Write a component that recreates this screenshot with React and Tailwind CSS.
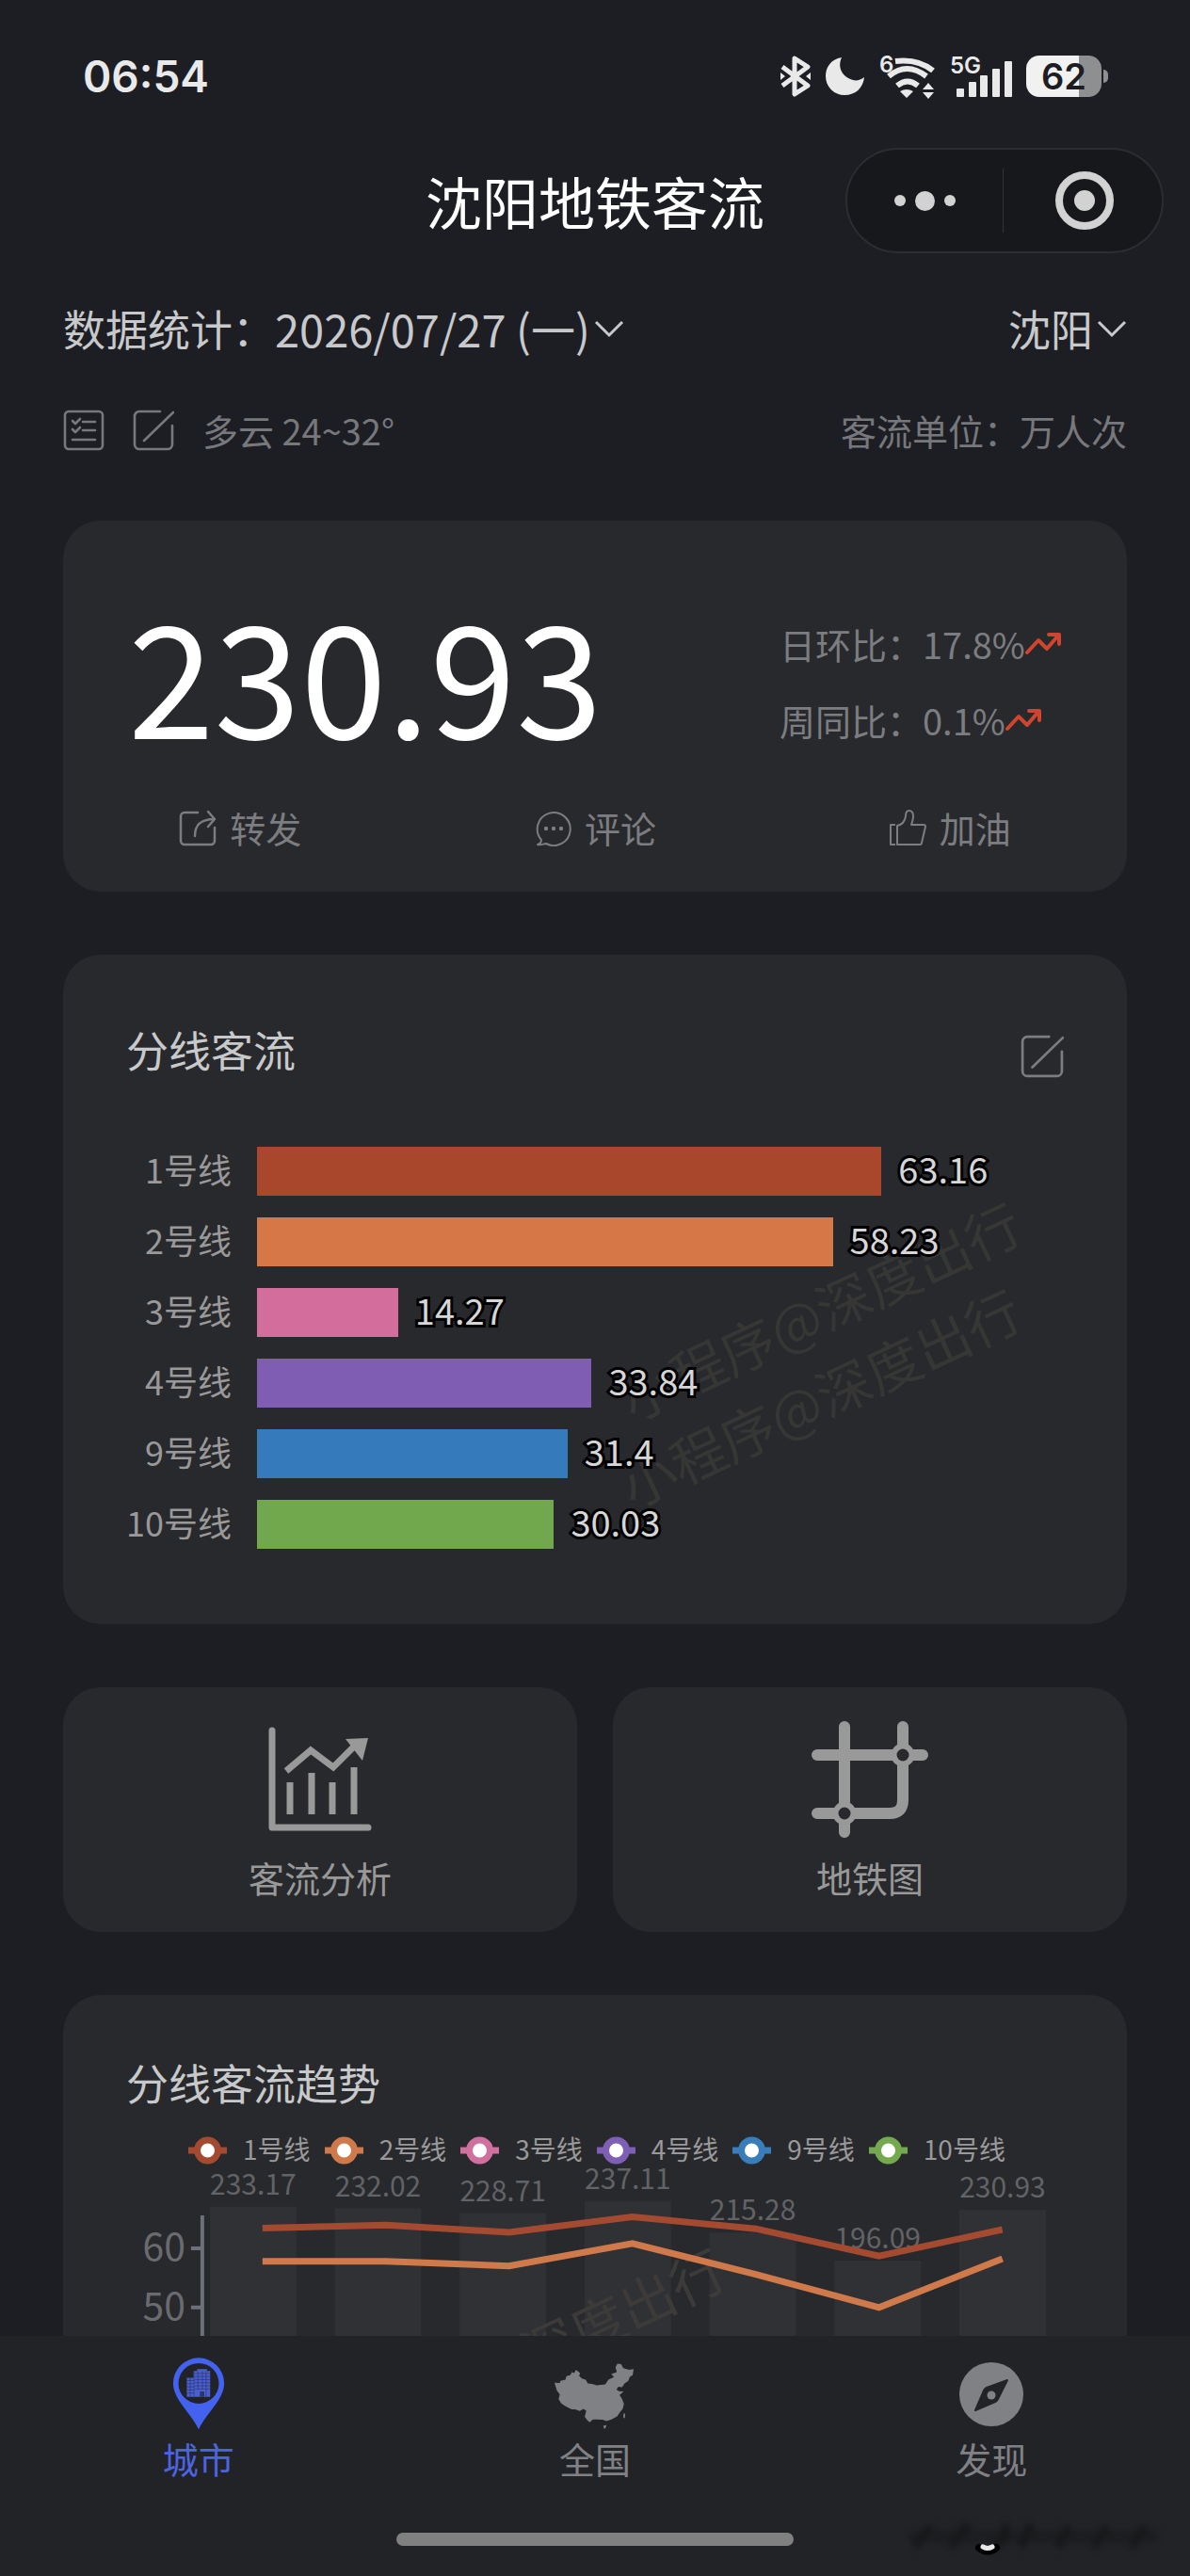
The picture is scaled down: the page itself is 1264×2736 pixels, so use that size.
const LINES = [
  { name: "1号线", value: 63.16, bar: "bg-[#a8472b]", stroke: "#a34a30" },
  { name: "2号线", value: 58.23, bar: "bg-[#d67748]", stroke: "#d07a4c" },
  { name: "3号线", value: 14.27, bar: "bg-[#d36d9b]", stroke: "#d0709e" },
  { name: "4号线", value: 33.84, bar: "bg-[#7e5db3]", stroke: "#7f5fb5" },
  { name: "9号线", value: 31.4, bar: "bg-[#357abb]", stroke: "#3a7dbb" },
  { name: "10号线", value: 30.03, bar: "bg-[#72a84d]", stroke: "#74a94f" },
];

const BAR_MAX = 81.6;

const TOTALS = [233.17, 232.02, 228.71, 237.11, 215.28, 196.09, 230.93];

const TREND = [
  { stroke: "#a34a30", values: [63.4, 63.9, 62.7, 65.3, 63.3, 58.7, 63.16] },
  { stroke: "#d07a4c", values: [57.8, 57.8, 57, 60.8, 55.6, 50, 58.23] },
];

const WATERMARK = "小程序@深度出行";

const Chevron = () => (
  <svg viewBox="0 0 32 20" className="h-5 w-8" fill="none" stroke="#c8c9cb" strokeWidth="3" aria-hidden="true">
    <path d="M2 3l14 14L30 3" />
  </svg>
);

const EditIcon = ({ className }) => (
  <svg viewBox="0 0 44 44" className={className} fill="none" stroke="currentColor" strokeWidth="2.6" strokeLinecap="round" aria-hidden="true">
    <path d="M29 2H7a5 5 0 0 0-5 5v30a5 5 0 0 0 5 5h30a5 5 0 0 0 5-5V17" />
    <path d="M43 3L12 33" />
  </svg>
);

const ListIcon = () => (
  <svg viewBox="0 0 44 44" className="size-11" fill="none" stroke="currentColor" strokeWidth="2.6" strokeLinecap="round" aria-hidden="true">
    <rect x="2" y="2" width="40" height="40" rx="4" />
    <path d="M21 13h13M21 22h13M10 32h24" />
    <path d="M10 12l3 3 5-5M10 21l3 3 5-5" strokeLinejoin="round" />
  </svg>
);

const TrendUp = () => (
  <svg viewBox="0 0 38 24" className="h-6 w-[38px]" fill="none" stroke="#d0452f" strokeWidth="4" strokeLinecap="round" strokeLinejoin="round" aria-hidden="true">
    <path d="M2 21L14 8l9 9L35 3" />
    <path d="M25 2h11v10" />
  </svg>
);

const ShareIcon = () => (
  <svg viewBox="0 0 40 40" className="size-10" fill="none" stroke="currentColor" strokeWidth="2.5" strokeLinecap="round" strokeLinejoin="round" aria-hidden="true">
    <path d="M20 4H6a4 4 0 0 0-4 4v26a4 4 0 0 0 4 4h28a4 4 0 0 0 4-4V20" />
    <path d="M17 29c0-11 5-18 21-18M31 3l7 8-7 8" />
  </svg>
);

const CommentIcon = () => (
  <svg viewBox="0 0 40 40" className="size-10" fill="none" stroke="currentColor" strokeWidth="2" strokeLinejoin="round" aria-hidden="true">
    <path d="M8 33a17.5 17.5 0 1 1 5 4c-3 0-5 2-9 1 3-1 4-3 4-5z" />
    <g fill="currentColor" stroke="none">
      <circle cx="13" cy="21" r="2.2" />
      <circle cx="21" cy="21" r="2.2" />
      <circle cx="29" cy="21" r="2.2" />
    </g>
  </svg>
);

const LikeIcon = () => (
  <svg viewBox="0 0 40 40" className="size-10" fill="none" stroke="currentColor" strokeWidth="2" strokeLinejoin="round" aria-hidden="true">
    <path d="M7 17H2v21h5" />
    <path d="M9 38V18c5-1 8-4 9-10 0-4 1-6 3.500-6S26 4 26 8c0 3-1 6-2 9h13c1 0 2 1 2 2l-4 17c0 1-1 2-2 2H9z" />
  </svg>
);

const AnalysisIcon = () => (
  <svg viewBox="0 0 110 112" className="h-28 w-[110px]" fill="none" stroke="#999" aria-hidden="true">
    <path d="M4 4v103h102" strokeWidth="7" strokeLinecap="round" strokeLinejoin="round" />
    <path d="M23 59v34M46 49v44M68 59v34M91 43v50" strokeWidth="7" />
    <path d="M19 47l26-22 24 18 24-24" strokeWidth="7" />
    <path d="M82 13l24-1-6 24z" fill="#999" stroke="none" />
  </svg>
);

const MetroMapIcon = () => (
  <svg viewBox="0 0 126 126" className="size-[126px]" fill="none" stroke="#999" strokeWidth="12" strokeLinecap="round" aria-hidden="true">
    <path d="M7 37h112M36 7v112M98 7v78q0 14-14 14H7" />
    <circle cx="98" cy="37" r="9.500" fill="#28292c" strokeWidth="6" />
    <circle cx="36" cy="99" r="9.500" fill="#28292c" strokeWidth="6" />
  </svg>
);

const CityIcon = () => (
  <svg viewBox="66 38 168 236" className="h-[78px] w-14" aria-hidden="true">
    <path d="M150 272C128 222 68 176 68 124a82 82 0 0 1 164 0C232 176 172 222 150 272z" fill="#4362f0" />
    <circle cx="150" cy="124" r="65" fill="#222327" />
    <path d="M112 167v-61h22V84h11v-6h32v6h10v83z" fill="#4a5fd0" />
    <path d="M112 115h24M112 125h24M112 135h24M112 145h24M112 155h24M138 92h48M138 102h48M138 112h48M138 122h48M138 132h48M138 142h48M135 84v83M123 106v61M148 84v60M162 84v60M174 84v83" stroke="#2c3568" strokeWidth="2" />
    <path d="M154 150h14v17h-14z" fill="#2c3568" />
  </svg>
);

const CountryIcon = () => (
  <svg viewBox="53 38 264 236" className="h-[78px] w-[88px]" fill="#808185" aria-hidden="true">
    <path d="M55 122L72 123 74 116 90 112 93 101 106 97 111 88 118 91 124 80 137 91 134 100 143 108 155 112 162 124 176 126 190 130 218 127 228 112 246 104 237 94 255 88 251 72 257 61 269 62 276 75 294 80 309 78 306 98 297 103 292 116 280 124 272 136 260 135 254 144 262 149 277 150 264 161 272 174 278 190 274 206 266 216 256 230 238 240 222 245 210 241 192 240 178 240 168 249 160 242 152 231 157 212 148 206 136 213 124 208 108 207 88 196 76 188 68 174 72 160 62 146z" />
    <path d="M277 220l5 2-1 14-5-3zM212 260l10-2-3 9-5 3z" />
  </svg>
);

const DiscoverIcon = () => (
  <svg viewBox="0 0 68 78" className="h-[78px] w-[68px]" aria-hidden="true">
    <circle cx="34" cy="40" r="34" fill="#808185" />
    <path d="M51 25L41 45q-1 2-3 3L17 57l9-21q1-2 3-3z" fill="#222327" stroke="#222327" strokeWidth="2" strokeLinejoin="round" />
    <circle cx="34" cy="41" r="4.500" fill="#808185" />
  </svg>
);

const StatusBar = () => (
  <div className="flex h-14 items-center justify-between pl-[88px] pr-[87px] font-['Inter',sans-serif] text-[#e9e9ea]">
    <span className="text-[46px] leading-[56px] font-semibold">06:54</span>
    <div className="flex items-center gap-[15px]">
      <svg viewBox="0 0 34 44" className="h-11 w-[34px]" fill="none" stroke="currentColor" strokeWidth="5" strokeLinejoin="round" aria-hidden="true">
        <path d="M3 12l27 20-14 9V3l14 9L3 32" />
        <path d="M1 18v8l5-4zM33 18v8l-5-4z" fill="currentColor" stroke="none" />
      </svg>
      <svg viewBox="0 0 42 42" className="size-[42px]" fill="currentColor" aria-hidden="true">
        <path d="M17 1C5 3 0 12 0 21a20 20 0 0 0 20 20c12 0 20-8 21-19-4 3-8 4-12 3-11-3-17-13-12-24z" />
      </svg>
      <svg viewBox="0 0 60 52" className="h-[52px] w-[60px]" fill="none" stroke="currentColor" strokeWidth="6" aria-hidden="true">
        <path d="M17 10q24-3 40 10M10 26q19-16 40 0M19 36q11-9 22 0" />
        <path d="M22 42q7-4 14 0l-7 7zM46 40h12l-6-7zM46 43h12l-6 7z" fill="currentColor" stroke="none" />
        <text x="0" y="22" fill="currentColor" stroke="none" fontSize="24" fontWeight="600">6</text>
      </svg>
      <svg viewBox="0 0 66 52" className="h-[52px] w-[66px]" fill="currentColor" aria-hidden="true">
        <rect x="7" y="39" width="8" height="9" rx="1" />
        <rect x="20" y="32" width="8" height="16" rx="1" />
        <rect x="32" y="25" width="8" height="23" rx="1" />
        <rect x="45" y="18" width="8" height="30" rx="1" />
        <rect x="58" y="10" width="8" height="38" rx="1" />
        <text x="0" y="23" fontSize="24" fontWeight="600">5G</text>
      </svg>
      <div className="flex items-center gap-[2px]">
        <div className="flex h-11 w-20 items-center justify-center rounded-[14px] bg-linear-to-r from-[#f1f1f1] from-70% to-[#8e8f91] to-70% text-[38px] leading-[44px] font-semibold text-[#1d1e23]">
          62
        </div>
        <div className="h-[14px] w-[5px] rounded-r-full bg-[#8e8f91]" />
      </div>
    </div>
  </div>
);

const TitleBar = () => (
  <header className="mt-12 grid grid-cols-[1fr_auto_1fr] items-center pr-7">
    <h1 className="col-start-2 pl-7 text-[60px] leading-[84px] text-white">沈阳地铁客流</h1>
    <div className="flex h-28 w-[338px] items-center justify-self-end rounded-full border-2 border-[#2c2d31] bg-[#17181b]">
      <button type="button" aria-label="更多" className="flex flex-1 items-center justify-center gap-2.5">
        <span className="size-3 rounded-full bg-[#d2d2d2]" />
        <span className="size-[21px] rounded-full bg-[#d2d2d2]" />
        <span className="size-3 rounded-full bg-[#d2d2d2]" />
      </button>
      <span className="h-[68px] w-px bg-[#323337]" />
      <button type="button" aria-label="关闭" className="flex flex-1 items-center justify-center pl-1">
        <span className="flex size-[62px] items-center justify-center rounded-full border-8 border-[#d2d2d2]">
          <span className="size-[22px] rounded-full bg-[#d2d2d2]" />
        </span>
      </button>
    </div>
  </header>
);

const Filters = () => (
  <div className="px-[67px]">
    <div className="mt-12 flex h-16 items-center justify-between text-[45px] leading-[64px] text-[#c8c9cb]">
      <div className="flex items-center">
        <label htmlFor="date">数据统计：</label>
        <select id="date" className="mr-1 appearance-none bg-transparent text-[47px] [field-sizing:content]">
          <option>2026/07/27 (一)</option>
        </select>
        <Chevron />
      </div>
      <div className="flex items-center">
        <select aria-label="城市" className="mr-1 appearance-none bg-transparent [field-sizing:content]">
          <option>沈阳</option>
        </select>
        <Chevron />
      </div>
    </div>
    <div className="mt-12 flex h-14 items-center justify-between text-[38px] leading-[56px] text-[#77787c]">
      <div className="flex items-center gap-[30px]">
        <button type="button" aria-label="清单"><ListIcon /></button>
        <button type="button" aria-label="编辑"><EditIcon className="size-11" /></button>
        <span>多云 24~32°</span>
      </div>
      <span>客流单位：万人次</span>
    </div>
  </div>
);

const Summary = () => (
  <section className="rounded-[40px] bg-[#28292c] pt-[90px] pb-10 text-[38px] text-[#7c7d80]">
    <div className="flex items-start justify-between px-[67px]">
      <p className="pl-0.5 text-[165px] leading-[142px] text-white">230.93</p>
      <div className="w-[302px] leading-[81px]">
        <p className="flex items-center">日环比：17.8%<TrendUp /></p>
        <p className="flex items-center">周同比：0.1%<TrendUp /></p>
      </div>
    </div>
    <div className="mt-[46px] grid grid-cols-3 leading-[56px]">
      <button type="button" className="flex items-center justify-center gap-3.5"><ShareIcon />转发</button>
      <button type="button" className="flex items-center justify-center gap-3.5"><CommentIcon />评论</button>
      <button type="button" className="flex items-center justify-center gap-3.5"><LikeIcon />加油</button>
    </div>
  </section>
);

const LineFlow = () => (
  <section className="relative rounded-[40px] bg-[#28292c] px-[67px] pt-[71px] pb-20">
    <div className="flex items-end justify-between">
      <h2 className="text-[45px] leading-[60px] text-[#c8c9cb]">分线客流</h2>
      <button type="button" aria-label="编辑分线客流" className="text-[#7c7d80]"><EditIcon className="size-[46px]" /></button>
    </div>
    <div className="absolute top-[331px] left-[573px] -rotate-25 text-[58px] leading-[92px] text-[#363635]" aria-hidden="true">
      {WATERMARK}
    </div>
    <div className="absolute top-[423px] left-[573px] -rotate-25 text-[58px] leading-[92px] text-[#363635]" aria-hidden="true">
      {WATERMARK}
    </div>
    <ul className="relative mt-[73px] flex flex-col gap-[23px]">
      {LINES.map((line) => (
        <li key={line.name} className="flex h-[52px] items-center">
          <span className="w-28 pb-1.5 text-right text-[36px] leading-[46px] whitespace-nowrap text-[#999]">{line.name}</span>
          <div className="ml-[27px] flex flex-1 items-center gap-[18px]">
            <div className={`h-[52px] shrink-0 ${line.bar}`} style={{ width: `${(line.value / BAR_MAX) * 100}%` }} />
            <span className="pb-1.5 text-[38px] leading-[46px] text-[#d6d6d6] [-webkit-text-stroke:6px_#000] [paint-order:stroke_fill]">
              {line.value}
            </span>
          </div>
        </li>
      ))}
    </ul>
  </section>
);

const Shortcuts = () => (
  <div className="grid grid-cols-2 gap-[38px] text-[38px] leading-[56px] text-[#999]">
    <button type="button" className="flex h-[260px] flex-col items-center justify-between rounded-[40px] bg-[#28292c] pt-[42px] pb-[30px]">
      <AnalysisIcon />
      客流分析
    </button>
    <button type="button" className="flex h-[260px] flex-col items-center justify-between rounded-[40px] bg-[#28292c] pt-[35px] pb-[30px]">
      <MetroMapIcon />
      地铁图
    </button>
  </div>
);

const totalY = (v) => 38.7 + (237.11 - v) * 1.543;
const lineY = (v) => 89 - (v - 60) * 6.3;

const TrendChart = () => (
  <svg viewBox="0 0 1131 300" className="w-full" role="img" aria-label="分线客流趋势图">
    {TOTALS.map((v, i) => (
      <rect key={v} x={156 + i * 132.8} y={totalY(v)} width="92" height={300 - totalY(v)} fill="#303134" />
    ))}
    <text x="492" y="227" transform="rotate(-25 492 206)" textAnchor="middle" fontSize="58" fill="#3c3b39">{WATERMARK}</text>
    <g fill="#626366" fontSize="30" textAnchor="middle">
      {TOTALS.map((v, i) => (
        <text key={v} x={202 + i * 132.8} y={totalY(v) - 13}>{v}</text>
      ))}
    </g>
    <path d="M148 54v246M136 89h12M136 152h12" stroke="#6e7079" strokeWidth="4" fill="none" />
    <g fill="#6a6b6e" fontSize="41" textAnchor="end">
      <text x="130" y="102">60</text>
      <text x="130" y="165">50</text>
    </g>
    {TREND.map((s) => (
      <polyline
        key={s.stroke}
        points={s.values.map((v, i) => `${212 + i * 131.1},${lineY(v)}`).join(" ")}
        fill="none"
        stroke={s.stroke}
        strokeWidth="7"
      />
    ))}
  </svg>
);

const Trend = () => (
  <section className="rounded-t-[40px] bg-[#28292c] pt-[63px]">
    <h2 className="px-[67px] text-[45px] leading-[60px] text-[#c8c9cb]">分线客流趋势</h2>
    <ul className="mt-[27px] flex h-[30px] items-center justify-center gap-[15px] pl-1 text-[28px] leading-[30px] text-[#999]">
      {LINES.map((line) => (
        <li key={line.name} className="flex items-center gap-[17px] whitespace-nowrap">
          <svg viewBox="0 0 41 30" className="h-[30px] w-[41px]" aria-hidden="true">
            <path d="M0 15h41" stroke={line.stroke} strokeWidth="7" />
            <circle cx="20.500" cy="15" r="11" fill="#fff" stroke={line.stroke} strokeWidth="7" />
          </svg>
          <span className="pb-1">{line.name}</span>
        </li>
      ))}
    </ul>
    <TrendChart />
  </section>
);

const TabBar = () => (
  <nav className="relative bg-[#222327] pt-[22px] pb-8">
    <div className="grid grid-cols-3 text-[38px] leading-[48px] text-[#808185]">
      <a href="#city" className="flex flex-col items-center gap-1.5 text-[#4c64e0]" aria-current="page"><CityIcon />城市</a>
      <a href="#country" className="flex flex-col items-center gap-1.5"><CountryIcon />全国</a>
      <a href="#discover" className="flex flex-col items-center gap-1.5"><DiscoverIcon />发现</a>
    </div>
    <div className="mx-auto mt-[55px] h-3.5 w-1/3 rounded-full bg-[#808080]" />
    <svg viewBox="0 0 280 44" className="absolute right-6 bottom-5 h-11 w-[280px]" fill="none" strokeLinecap="round" aria-hidden="true">
      <g className="blur-[3px]" stroke="#17181a">
        <path d="M14 30L26 14M52 30l14-18M98 30q12-4 10-18M126 30l8-18M166 30l8-16M204 30l10-16M244 30l10-16" strokeWidth="9" />
        <path d="M12 22h252" strokeWidth="14" strokeOpacity="0.5" />
      </g>
      <path d="M80 34q9 7 18 0" stroke="#000" strokeWidth="8" />
      <path d="M84 33q5 3 10 0" stroke="#e8e8e8" strokeWidth="5" />
    </svg>
  </nav>
);

export default function App() {
  return (
    <div className="flex h-screen flex-col bg-[#1d1e23] font-['Noto_Sans_CJK_SC',sans-serif]">
      <div className="pt-[53px]">
        <StatusBar />
        <TitleBar />
      </div>
      <main className="min-h-0 flex-1 overflow-y-auto [scrollbar-width:none]">
        <Filters />
        <div className="mt-[68px] flex flex-col gap-[67px] px-[67px]">
          <Summary />
          <LineFlow />
          <Shortcuts />
          <Trend />
        </div>
      </main>
      <TabBar />
    </div>
  );
}
